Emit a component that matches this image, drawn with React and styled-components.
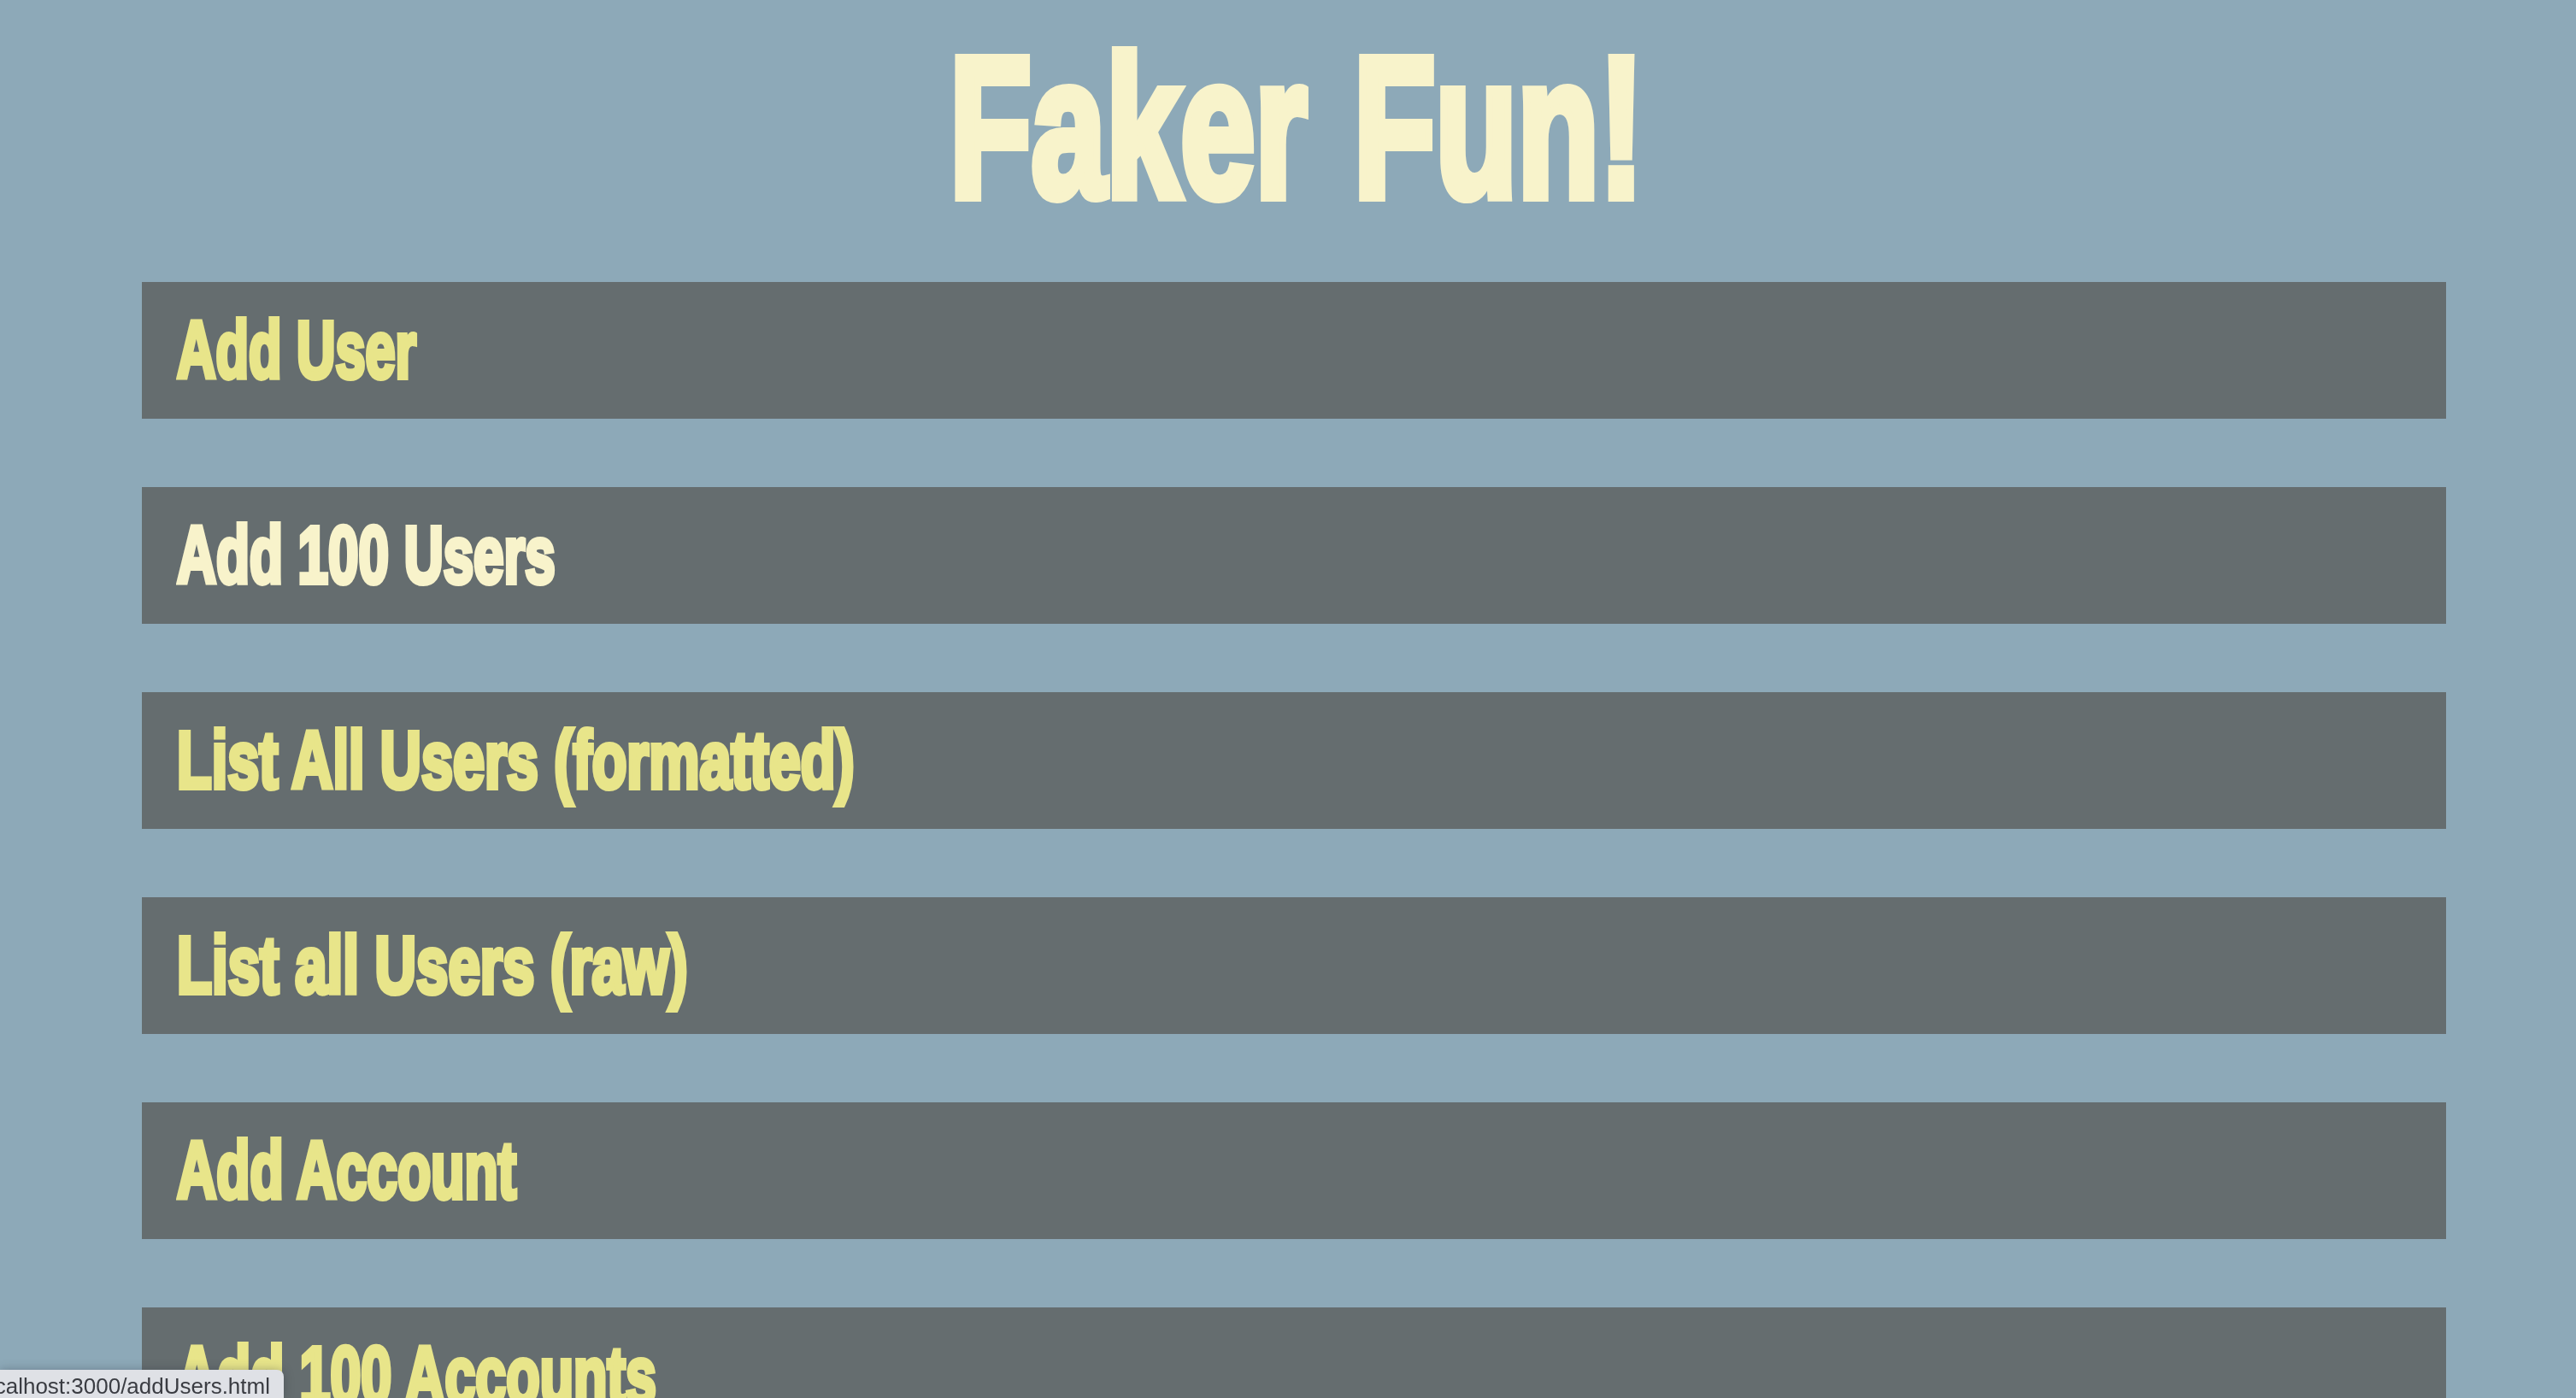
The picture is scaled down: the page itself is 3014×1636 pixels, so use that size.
import React from 'react';
import styled, { createGlobalStyle } from 'styled-components';

const links = [
  { label: 'Add User', squeeze: 0.67 },
  { label: 'Add 100 Users', squeeze: 0.678, hovered: true },
  { label: 'List All Users (formatted)', squeeze: 0.708 },
  { label: 'List all Users (raw)', squeeze: 0.715 },
  { label: 'Add Account', squeeze: 0.683 },
  { label: 'Add 100 Accounts', squeeze: 0.687 },
  { label: 'List All Accounts', squeeze: 0.687 },
];

const GlobalStyle = createGlobalStyle`
  html, body {
    margin: 0;
    height: 100%;
    overflow: hidden;
    background: #8da9b8;
  }
`;

const Page = styled.div`
  height: 1636px;
  overflow: hidden;
  font-family: 'Liberation Sans', Arial, sans-serif;
  font-weight: 700;
`;

const Title = styled.h1`
  margin: 0;
  height: 330px;
  padding: 14px 0 0 20px;
  box-sizing: border-box;
  text-align: center;
  font-size: 234px;
  line-height: 270px;
  color: #f8f3cb;

  span {
    display: inline-block;
    transform: scaleX(0.67);
    -webkit-text-stroke: 12px #f8f3cb;
    word-spacing: 16px;
    white-space: nowrap;
  }
`;

const Menu = styled.nav`
  display: flex;
  flex-direction: column;
  gap: 80px;
  margin: 0 152px 0 166px;
`;

const MenuLink = styled.a`
  display: block;
  height: 160px;
  padding-left: 41px;
  background: #656d6f;
  font-size: 94px;
  line-height: 160px;
  white-space: nowrap;
  color: ${(p) => (p.$hovered ? '#f8f3cb' : '#e8e58a')};
`;

const Label = styled.span`
  display: inline-block;
  transform: scaleX(${(p) => p.$squeeze});
  transform-origin: left center;
  -webkit-text-stroke: 6px currentColor;
`;

const StatusBar = styled.div`
  position: fixed;
  left: 0;
  bottom: 0;
  width: 332px;
  height: 33px;
  overflow: hidden;
  display: flex;
  justify-content: flex-end;
  padding-right: 16px;
  box-sizing: border-box;
  background: #dfe1e6;
  border-top-right-radius: 8px;
  box-shadow: 0 0 12px rgba(40, 50, 60, 0.35);
  font-family: 'Liberation Sans', Arial, sans-serif;
  font-size: 26px;
  line-height: 38px;
  font-weight: 400;
  color: #3a3c42;
  white-space: nowrap;
`;

const App = () => (
  <Page>
    <GlobalStyle />
    <Title>
      <span>Faker Fun!</span>
    </Title>
    <Menu>
      {links.map((link) => (
        <MenuLink key={link.label} $hovered={link.hovered}>
          <Label $squeeze={link.squeeze}>{link.label}</Label>
        </MenuLink>
      ))}
    </Menu>
    <StatusBar>localhost:3000/addUsers.html</StatusBar>
  </Page>
);

export default App;
